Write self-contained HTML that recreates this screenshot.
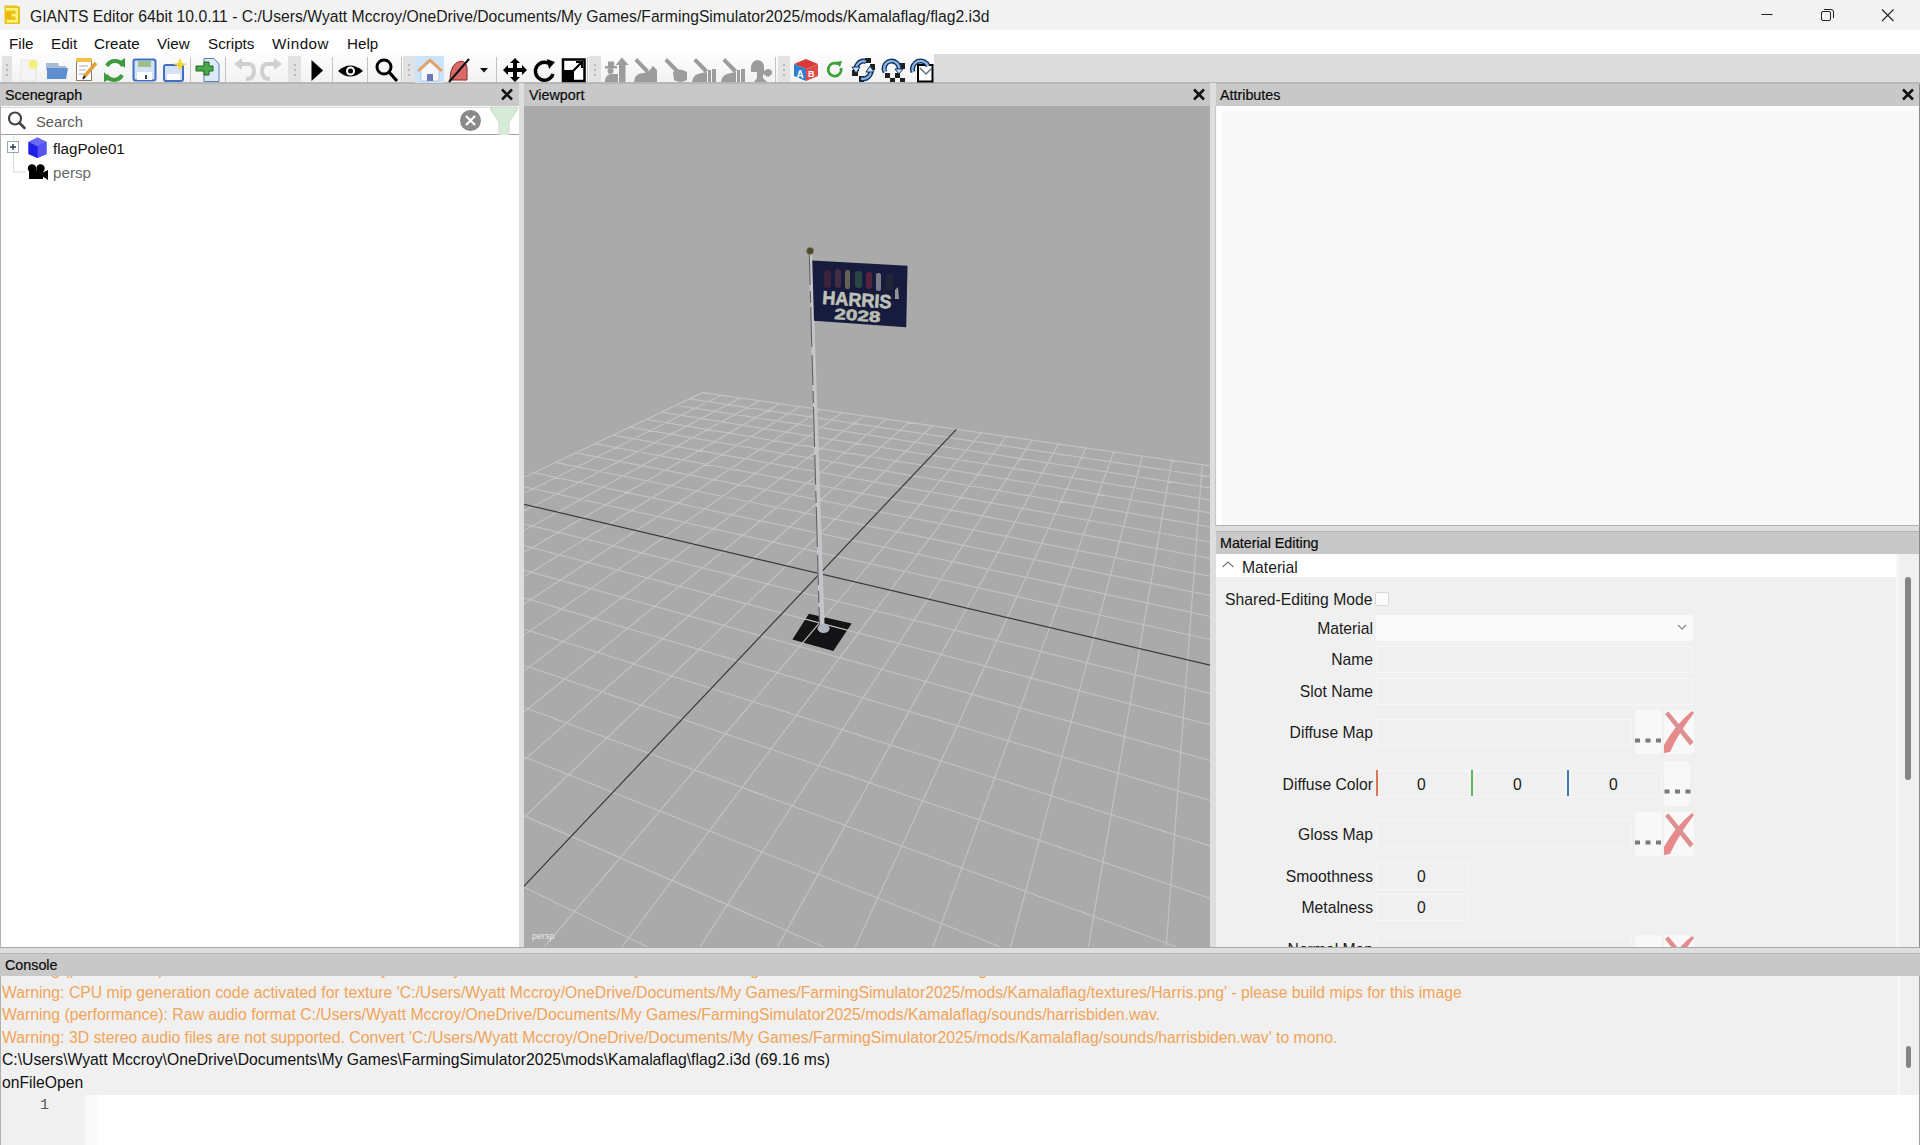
<!DOCTYPE html>
<html><head><meta charset="utf-8">
<style>
*{margin:0;padding:0;box-sizing:border-box}
html,body{width:1920px;height:1145px;overflow:hidden;background:#f0f0f0;font-family:"Liberation Sans",sans-serif;color:#000}
.a{position:absolute}
.t{position:absolute;white-space:nowrap;line-height:1}
.hd{position:absolute;height:22px;background:#c8c8c8;border-top:1px solid #b4b4b4}
.hl{position:absolute;white-space:nowrap;line-height:1;font-size:14.3px;color:#0a0a0a;-webkit-text-stroke:0.2px #0a0a0a}
.cx{position:absolute;width:14px;height:14px}
.lbl{position:absolute;white-space:nowrap;line-height:1;font-size:15.7px;color:#1b1b1b;text-align:right;width:160px}
.fld{position:absolute;background:#f0f0f0;border:1px solid #f6f6f6}
.con{position:absolute;left:2px;white-space:nowrap;line-height:1;font-size:15.72px}
.w{color:#f0a458;font-size:15.78px}
</style></head><body>
<!-- title bar -->
<div class="a" style="left:0;top:0;width:1920px;height:30px;background:#f3f3f3"></div>
<svg class="a" style="left:0;top:0" width="30" height="30">
<path d="M4.5 5.5 L16 5.5 L20 7 L20 24 L4.5 24 Z" fill="#e8c21e"/>
<path d="M5.5 12 L11 12 L11 18 L5.5 18 Z" fill="#f5b800"/>
<path d="M6 8 H18 V22.5 H6.5 V20 H15.5 V16.5 H11.5 V14 H15.5 V10.5 H6 Z" fill="#fdf27a"/>
</svg>
<div class="t" style="left:30px;top:8.5px;font-size:15.71px;color:#1a1a1a">GIANTS Editor 64bit 10.0.11 - C:/Users/Wyatt Mccroy/OneDrive/Documents/My Games/FarmingSimulator2025/mods/Kamalaflag/flag2.i3d</div>
<svg class="a" style="left:1750px;top:0" width="170" height="30">
<path d="M11.5 14.5 H22.5" stroke="#222" stroke-width="1"/>
<rect x="71.5" y="11.5" width="9" height="9" rx="1.5" fill="none" stroke="#222" stroke-width="1"/>
<path d="M74 9.5 H81 Q83.5 9.5 83.5 12 V18" fill="none" stroke="#222" stroke-width="1"/>
<path d="M132 9.5 L143.5 21 M143.5 9.5 L132 21" stroke="#222" stroke-width="1.1"/>
</svg>
<!-- menu -->
<div class="a" style="left:0;top:30px;width:1920px;height:24px;background:#fff"></div>
<div class="t" style="left:9px;top:36px;font-size:15.2px;color:#111">File</div>
<div class="t" style="left:51px;top:36px;font-size:15.2px;color:#111">Edit</div>
<div class="t" style="left:94px;top:36px;font-size:15.2px;color:#111">Create</div>
<div class="t" style="left:157px;top:36px;font-size:15.2px;color:#111">View</div>
<div class="t" style="left:208px;top:36px;font-size:15.2px;color:#111">Scripts</div>
<div class="t" style="left:272px;top:36px;font-size:15.2px;letter-spacing:0.5px;color:#111">Window</div>
<div class="t" style="left:347px;top:36px;font-size:15.2px;color:#111">Help</div>
<!-- toolbar -->
<div class="a" style="left:0;top:54px;width:1920px;height:29px;background:#dcdcdc"></div>
<div class="a" style="left:0;top:54px;width:934px;height:29px;background:linear-gradient(#fdfdfd,#f1f1f1)"></div>
<div class="a" style="left:0;top:82px;width:1920px;height:1px;background:#b9b9b9"></div>
<svg class="a" style="left:0;top:0" width="940" height="84">
<!-- grips -->
<g fill="#e2e2e2">
<rect x="2" y="56" width="10" height="26"/><rect x="288" y="56" width="13" height="26"/><rect x="403" y="56" width="12" height="26"/><rect x="589" y="56" width="12" height="26"/><rect x="778" y="56" width="12" height="26"/>
</g>
<g fill="#b8b8b8">
<rect x="6" y="64" width="2" height="2"/><rect x="6" y="69" width="2" height="2"/><rect x="6" y="74" width="2" height="2"/>
<rect x="294" y="64" width="2" height="2"/><rect x="294" y="69" width="2" height="2"/><rect x="294" y="74" width="2" height="2"/>
<rect x="408" y="64" width="2" height="2"/><rect x="408" y="69" width="2" height="2"/><rect x="408" y="74" width="2" height="2"/>
<rect x="594" y="64" width="2" height="2"/><rect x="594" y="69" width="2" height="2"/><rect x="594" y="74" width="2" height="2"/>
<rect x="783" y="64" width="2" height="2"/><rect x="783" y="69" width="2" height="2"/><rect x="783" y="74" width="2" height="2"/>
</g>
<!-- separators -->
<g fill="#c4c4c4">
<rect x="190" y="58" width="1" height="24"/><rect x="225" y="57" width="1" height="25"/><rect x="332" y="57" width="1" height="25"/><rect x="367" y="57" width="1" height="25"/><rect x="401" y="57" width="1" height="25"/><rect x="496" y="57" width="1" height="25"/><rect x="587" y="57" width="1" height="25"/><rect x="775" y="57" width="1" height="25"/>
</g>
<!-- new -->
<rect x="21" y="60" width="15" height="21" fill="#f4f4f4" stroke="#e3e3e3"/>
<circle cx="33" cy="64.5" r="4.5" fill="#f3f07a"/>
<!-- open folder -->
<path d="M46 63 L58 63 L59 66 L66 66 L66 70 L46 70 Z" fill="#a9bcd6"/>
<path d="M47 68 L68 68 L66 79 L47 79 Z" fill="#5f8fd0"/>
<!-- notepad -->
<rect x="76.5" y="60.5" width="15" height="20" fill="#fff" stroke="#8a7a60"/>
<rect x="76" y="58" width="16" height="4" fill="#f3c24a"/>
<path d="M79 66 H88 M79 70 H86 M79 74 H85" stroke="#aaa" stroke-width="1"/>
<path d="M84 77 L96 63" stroke="#e2a23a" stroke-width="3.5"/><path d="M83 79 L85 76" stroke="#222" stroke-width="2"/>
<!-- refresh green -->
<path d="M107 66 A9 9 0 0 1 123 66" fill="none" stroke="#3d9b3d" stroke-width="4"/>
<path d="M122 75 A9 9 0 0 1 106 75" fill="none" stroke="#3d9b3d" stroke-width="4"/>
<path d="M119 62 L125 58 L125 68 Z M110 79 L104 82 L104 72 Z" fill="#3d9b3d"/>
<!-- save -->
<rect x="133.5" y="59.5" width="22" height="21" rx="2" fill="#d5e2f5" stroke="#3e6fc5" stroke-width="2"/>
<rect x="138" y="61" width="13" height="6" fill="#9ec08a"/>
<rect x="137" y="72" width="15" height="8" fill="#fff"/><rect x="145" y="75" width="2" height="4" fill="#345"/>
<!-- save as -->
<rect x="164" y="65" width="19" height="16" rx="2" fill="#d5e2f5" stroke="#3e6fc5" stroke-width="2"/>
<rect x="167" y="74" width="13" height="6" fill="#fff"/>
<path d="M180 58 L182 63 L187 64 L182 66 L180 71 L178 66 L173 64 L178 63 Z" fill="#f2d430"/>
<!-- add page -->
<path d="M204 58.5 H214 L219 64 V81.5 H204 Z" fill="#dde9f7" stroke="#5b7fb5"/>
<path d="M196 66 H204 V62 H209 V66 H213 V71 H209 V75 H204 V71 H196 Z" fill="#4aa84a" stroke="#1f6b1f" stroke-width="1"/>
<!-- undo / redo -->
<path d="M240 64 L248 64 Q254 64 254 71 Q254 79 246 79" fill="none" stroke="#cfcfcf" stroke-width="4"/>
<path d="M234 64 L242 58 L242 70 Z" fill="#cfcfcf"/>
<path d="M276 64 L268 64 Q262 64 262 71 Q262 79 270 79" fill="none" stroke="#cfcfcf" stroke-width="4"/>
<path d="M282 64 L274 58 L274 70 Z" fill="#cfcfcf"/>
<!-- play -->
<path d="M311.5 60 L323 70.5 L311.5 81 Z" fill="#000"/>
<!-- eye -->
<path d="M338 71 Q350 60 363 71 Q350 82 338 71 Z" fill="#000"/>
<circle cx="350.5" cy="71" r="4.5" fill="#fff"/><circle cx="350.5" cy="71" r="2.5" fill="#000"/>
<!-- magnifier -->
<circle cx="384" cy="67" r="7" fill="none" stroke="#000" stroke-width="3"/>
<path d="M389 72 L397 81" stroke="#000" stroke-width="3.2"/>
<!-- home -->
<rect x="415" y="56" width="29" height="27" fill="#cce4f7"/>
<path d="M421 70 L430 62 L439 70 V81 H421 Z" fill="#f4f7fb" stroke="#b9c7d8"/>
<path d="M418 71 L430 60 L442 71" fill="none" stroke="#e8a060" stroke-width="2.5"/>
<rect x="427" y="74" width="6" height="7" fill="#6f78b8"/>
<!-- red icon -->
<path d="M450 80 Q450 62 462 61 Q468 63 467 72 L467 80 Z" fill="#d86a6a" stroke="#8a2a2a"/>
<path d="M449 82 L469 59" stroke="#111" stroke-width="2"/>
<path d="M480 68 H488 L484 72.5 Z" fill="#111"/>
<!-- move -->
<g fill="#000"><path d="M515 58 L520 63 H517 V68 H522 V65 L527 70 L522 75 V72 H517 V77 H520 L515 82 L510 77 H513 V72 H508 V75 L503 70 L508 65 V68 H513 V63 H510 Z"/></g>
<!-- rotate -->
<path d="M551 65 A9 9 0 1 0 553 74" fill="none" stroke="#000" stroke-width="3.5"/>
<path d="M547 59 L555 62 L549 69 Z" fill="#000"/>
<!-- scale -->
<rect x="563" y="59.5" width="21.5" height="21.5" fill="#fff" stroke="#000" stroke-width="2.5"/>
<rect x="563" y="70" width="11" height="11" fill="#000"/>
<path d="M573 71 L582 62 M576 62 H582 V68" fill="none" stroke="#000" stroke-width="2.2"/>
<!-- gray icons -->
<g fill="#9c9c9c">
<rect x="608" y="61.5" width="6" height="5"/><rect x="605" y="66" width="12" height="2.5"/><circle cx="610.5" cy="71" r="3"/>
<path d="M615.5 65 L622 57.5 L628.5 65 Z"/><rect x="619" y="64" width="6.5" height="18"/>
<path d="M605 82 Q605 74 612 74 L618 74 L618 82 Z"/>
<path d="M637 58 L649 70 L646 73 L634.5 61 Z"/>
<path d="M634 82 Q634.5 73 644 73 L649 71 L653 66 L657 70 V82 Z"/>
<path d="M667 58 L679 70 L676 73 L664.5 61 Z"/>
<path d="M673 72 Q680 67 687 72 V80 Q680 84 674 80 Z"/>
<path d="M696 58 L708 70 L705 73 L693.5 61 Z"/>
<path d="M692 82 Q692.5 74 702 73 L707 72 V82 Z"/><rect x="708" y="70" width="3" height="12"/><rect x="712" y="69" width="4" height="13"/>
<path d="M725 58 L737 70 L734 73 L722.5 61 Z"/>
<path d="M721 82 Q721.5 74 731 73 L736 72 V82 Z"/><rect x="737" y="70" width="3" height="12"/><rect x="741" y="69" width="4" height="13"/>
<path d="M751 72 Q750 61 757 60 Q763 60 764 66 L764 71 Q769 67 772 71 Q773 75 768 77 L763 74 L763 78 L767 82 H754 L757 78 L757 72 Z"/>
</g>
<!-- AB cube -->
<path d="M794 64 L806 59 L818 64 L806 69 Z" fill="#d83a3a"/>
<path d="M794 64 L806 69 V81 L794 76 Z" fill="#2f7fd0"/>
<path d="M806 69 L818 64 V76 L806 81 Z" fill="#e04a4a"/>
<text x="796.5" y="78" font-size="10" font-weight="bold" fill="#fff" font-family="Liberation Sans">A</text>
<text x="808" y="77" font-size="9" font-weight="bold" fill="#fff" font-family="Liberation Sans">B</text>
<!-- small green refresh -->
<path d="M841 68 A6.5 6.5 0 1 1 838 64" fill="none" stroke="#3aa03a" stroke-width="2.8"/>
<path d="M835 62 L842 61 L840 67 Z" fill="#3aa03a"/>
<!-- blue icons -->
<g fill="#1f1f1f">
<rect x="865" y="58" width="6" height="5"/><rect x="852" y="70" width="6" height="6"/><rect x="870" y="64" width="5" height="6"/><rect x="859" y="76" width="5" height="6"/>
<rect x="885" y="73" width="5" height="5"/><rect x="895" y="73" width="5" height="5"/><rect x="890" y="78" width="5" height="4"/><rect x="900" y="63" width="5" height="6"/><rect x="900" y="78" width="5" height="4"/>
</g>
<g fill="none">
<path d="M857 72 A7.5 7.5 0 0 1 866 61.5" stroke="#12305a" stroke-width="5"/>
<path d="M857 72 A7.5 7.5 0 0 1 866 61.5" stroke="#8db6e6" stroke-width="2.2"/>
<path d="M870 68 A7.5 7.5 0 0 1 861 78.5" stroke="#12305a" stroke-width="5"/>
<path d="M870 68 A7.5 7.5 0 0 1 861 78.5" stroke="#8db6e6" stroke-width="2.2"/>
</g>
<path d="M852 67 L860 67 L856 73 Z M866 72 L874 72 L870 66 Z" fill="#cfe3f7" stroke="#12305a" stroke-width="1"/>
<path d="M885 72 A7.5 7.5 0 1 1 899 70" fill="none" stroke="#12305a" stroke-width="5"/>
<path d="M885 72 A7.5 7.5 0 1 1 899 70" fill="none" stroke="#8db6e6" stroke-width="2.2"/>
<path d="M895 69 L903 69 L899 74 Z" fill="#cfe3f7" stroke="#12305a" stroke-width="1"/>
<rect x="918" y="65" width="14.5" height="16.5" fill="#fff" stroke="#000" stroke-width="2"/>
<path d="M913 72 A7.5 7.5 0 1 1 928 66" fill="none" stroke="#12305a" stroke-width="5"/>
<path d="M913 72 A7.5 7.5 0 1 1 928 66" fill="none" stroke="#8db6e6" stroke-width="2.2"/>
<path d="M920 68 L926 74 L932 68" fill="none" stroke="#5a6a7a" stroke-width="1.3"/>
</svg>

<!-- panel headers -->
<div class="hd" style="left:0;top:83px;width:519px;height:23px"></div>
<div class="hl" style="left:5px;top:87.8px">Scenegraph</div>
<div class="a" style="left:519px;top:83px;width:5px;height:865px;background:#dedede"></div>
<div class="hd" style="left:524px;top:83px;width:686px;height:23px"></div>
<div class="hl" style="left:529px;top:87.8px">Viewport</div>
<div class="a" style="left:1210px;top:83px;width:6px;height:865px;background:#dedede"></div>
<div class="hd" style="left:1216px;top:83px;width:704px;height:23px"></div>
<div class="hl" style="left:1220px;top:87.8px">Attributes</div>
<svg class="a" style="left:0;top:0;pointer-events:none" width="1920" height="1145">
<g stroke="#111" stroke-width="2.5" stroke-linecap="butt">
<path d="M502 89.5 L512 99.5 M512 89.5 L502 99.5"/>
<path d="M1194 89.5 L1204 99.5 M1204 89.5 L1194 99.5"/>
<path d="M1903 89.5 L1913 99.5 M1913 89.5 L1903 99.5"/>
<path d="M1903 537.5 L1913 547.5 M1913 537.5 L1903 547.5"/>
<path d="M1903 959.5 L1913 969.5 M1913 959.5 L1903 969.5"/>
</g>
</svg>
<!-- scenegraph content -->
<div class="a" style="left:0;top:106px;width:1px;height:842px;background:#b0b0b0"></div>
<div class="a" style="left:1px;top:106px;width:518px;height:842px;background:#fff"></div>
<div class="a" style="left:1px;top:947px;width:518px;height:1px;background:#a8a8a8"></div>
<div class="a" style="left:1px;top:134px;width:518px;height:1px;background:#9f9f9f"></div>
<div class="a" style="left:1px;top:107px;width:488px;height:1px;background:#d8d8d8"></div>
<svg class="a" style="left:0;top:104px" width="520" height="80">
<circle cx="15" cy="14.5" r="6" fill="none" stroke="#444" stroke-width="2.2"/>
<path d="M19.5 19 L24.5 24" stroke="#444" stroke-width="2.6" stroke-linecap="round"/>
<circle cx="470.5" cy="16.5" r="10.5" fill="#8a8a8a"/>
<path d="M466 12 L475 21 M475 12 L466 21" stroke="#fff" stroke-width="2.2"/>
<path d="M490 3 L518 3 L518 6 L509 18 L509 31 L499 31 L499 18 L490 6 Z" fill="#d6ead8"/>
<path d="M490 3 L518 3 L509 18 L509 31 M499 31 L499 18 L490 3" fill="none" stroke="#cfd8cf" stroke-width="1"/>
<!-- tree -->
<path d="M13.5 33 V68 H26" fill="none" stroke="#b8b8b8" stroke-width="1" stroke-dasharray="1 1"/>
<rect x="7.5" y="37.5" width="11" height="11" fill="#fff" stroke="#98a8b8"/>
<path d="M10 43 H16 M13 40 V46" stroke="#2a3a4a" stroke-width="1.4"/>
<path d="M37.5 33.5 L46.5 38 L46.5 50 L37.5 54 L28.5 50 L28.5 38 Z" fill="#3a3aee"/>
<path d="M28.5 38 L37.5 42.5 L46.5 38 L37.5 33.5 Z" fill="#6a6af6"/>
<path d="M37.5 42.5 L46.5 38 L46.5 50 L37.5 54 Z" fill="#5454f2"/>
<path d="M37.5 42.5 L37.5 54 L28.5 50 L28.5 38 Z" fill="#1f1fe6"/>
<circle cx="32" cy="64.5" r="4.2" fill="#000"/><circle cx="40.5" cy="64.5" r="4.2" fill="#000"/>
<rect x="29" y="66" width="14" height="9" fill="#000"/>
<path d="M42 69 L48 66 L48 76 L42 72 Z" fill="#000"/>
</svg>
<div class="t" style="left:36px;top:115px;font-size:14.8px;color:#5a5a5a">Search</div>
<div class="t" style="left:53px;top:141px;font-size:15.2px;color:#111">flagPole01</div>
<div class="t" style="left:53px;top:165px;font-size:15.2px;color:#6a6a6a">persp</div>

<!-- viewport -->
<div class="a" style="left:524px;top:106px;width:686px;height:842px;background:#aaaaaa;overflow:hidden">
<svg width="686" height="842" style="position:absolute;left:0;top:0"><path d="M284.9 507.8 L327.7 517.6 L309.3 545.1 L268.4 533.5 Z" fill="#141416"/>
<path d="M1044.7 1624.7L774.4 372.7M1044.7 1624.7L-560.4 637.3M878.8 1522.7L741.4 368.0M998.5 1410.7L-490.3 604.0M733.1 1433.0L709.3 363.3M963.2 1247.6L-427.5 574.2M603.9 1353.5L678.2 358.8M935.5 1119.1L-371.0 547.4M488.6 1282.7L647.9 354.4M913.1 1015.3L-319.9 523.2M385.2 1219.0L618.4 350.2M894.6 929.7L-273.5 501.1M291.8 1161.6L589.7 346.0M879.1 857.9L-231.0 481.0M207.1 1109.5L561.7 342.0M865.9 796.8L-192.1 462.5M129.9 1062.0L534.5 338.0M854.5 744.1L-156.4 445.6M59.3 1018.5L508.0 334.2M844.7 698.3L-123.4 429.9M-5.6 978.6L482.2 330.5M836.0 658.1L-92.8 415.4M-65.4 941.9L457.0 326.8M828.3 622.5L-64.4 401.9M-172.0 876.3L408.4 319.8M815.3 562.3L-13.3 377.7M-219.7 847.0L385.0 316.4M809.7 536.6L9.8 366.7M-264.1 819.6L362.2 313.1M804.7 513.4L31.4 356.4M-305.7 794.0L339.8 309.9M800.1 492.2L51.8 346.8M-344.6 770.1L318.1 306.7M796.0 472.8L70.9 337.7M-381.1 747.6L296.8 303.6M792.1 455.0L88.9 329.1M-415.4 726.5L276.0 300.6M788.6 438.6L106.0 321.1M-447.8 706.6L255.6 297.7M785.3 423.4L122.1 313.4M-478.3 687.8L235.8 294.8M782.3 409.3L137.3 306.2M-507.2 670.1L216.3 292.0M779.4 396.3L151.8 299.3M-534.5 653.3L197.3 289.3M776.8 384.1L165.6 292.8M-560.4 637.3L178.7 286.6M774.4 372.7L178.7 286.6" stroke="#c2c2c2" stroke-width="1.2" fill="none"/><path d="M-120.7 907.8L432.4 323.3M821.4 590.8L-37.9 389.4" stroke="#3a3a3a" stroke-width="1.2" fill="none"/><path d="M284.8 149 L288.2 149 L300.5 519 L295 519 Z" fill="#c4c5c8"/>
<path d="M285.3 149 L295.5 519" stroke="#505050" stroke-width="1.1" stroke-dasharray="30 6 12 4 40 8" fill="none" opacity="0.85"/>
<ellipse cx="299.6" cy="522.5" rx="6" ry="4.5" fill="#aeb3c0"/>
<circle cx="286.1" cy="144.9" r="3.6" fill="#4a4a30" stroke="#8a8a60" stroke-width="0.8"/>
<g>
<path d="M288.3 154.5 L383.5 159.8 L382.2 221.3 L290 214.8 Z" fill="#171b3e"/>
<g opacity="0.55">
<rect x="300" y="164" width="7" height="18" rx="3" fill="#5a2a3a"/>
<rect x="311" y="163" width="6" height="19" rx="3" fill="#6a3a4a"/>
<rect x="321" y="164" width="5" height="19" rx="2" fill="#a89a70"/>
<rect x="331" y="165" width="7" height="17" rx="3" fill="#3a6a4a"/>
<rect x="342" y="166" width="6" height="17" rx="3" fill="#8a2a3a"/>
<rect x="352" y="167" width="5" height="18" rx="2" fill="#c8c8c0"/>
<rect x="362" y="168" width="7" height="16" rx="3" fill="#2a3030"/>
</g>
<g transform="translate(298,198) rotate(3.8)">
<text x="0" y="0" font-family="Liberation Sans" font-weight="bold" font-size="19" fill="#bfc1b8" stroke="#bfc1b8" stroke-width="0.6" transform="scale(0.95,1)">HARRIS</text>
</g>
<g transform="translate(310,213) rotate(4.2)">
<text x="0" y="0" font-family="Liberation Sans" font-weight="bold" font-size="16" fill="#b9bcb2" stroke="#b9bcb2" stroke-width="0.6" transform="scale(1.3,0.95)">2028</text>
</g>
<path d="M371 184 L374 181 L375 193 L371 193 Z" fill="#b0b4a8" opacity="0.8"/>
</g>
</svg>
<div class="t" style="left:8px;top:826px;font-size:9px;color:#e8e8e8">persp</div>
</div>
<!-- attributes -->
<div class="a" style="left:1216px;top:106px;width:704px;height:420px;background:#f8f8f8"></div>
<div class="a" style="left:1215px;top:106px;width:1px;height:420px;background:#c6c6c6"></div>
<div class="a" style="left:1217px;top:106px;width:5px;height:420px;background:#ffffff"></div>
<div class="a" style="left:1217px;top:106px;width:702px;height:5px;background:#ffffff"></div>
<div class="a" style="left:1919px;top:84px;width:1px;height:864px;background:#8c8c8c"></div>
<div class="a" style="left:1216px;top:525px;width:704px;height:1px;background:#b0b0b0"></div>
<div class="a" style="left:1216px;top:526px;width:703px;height:6px;background:#dedede"></div>
<div class="hd" style="left:1216px;top:531px;width:703px;height:23px"></div>
<div class="hl" style="left:1220px;top:535.8px">Material Editing</div>
<div class="a" style="left:1216px;top:554px;width:703px;height:393px;background:#f0f0f0"></div>
<div class="a" style="left:1216px;top:554px;width:681px;height:23px;background:#fff"></div>
<div class="a" style="left:1896px;top:554px;width:3px;height:393px;background:#f6f6f6"></div>
<div class="a" style="left:1905px;top:577px;width:6px;height:203px;background:#858585;border-radius:3px"></div>
<div class="a" style="left:1216px;top:947px;width:704px;height:1px;background:#c4c4c4"></div>
<svg class="a" style="left:1216px;top:554px" width="30" height="23"><path d="M6.5 13 L12 8 L17.5 13" fill="none" stroke="#777" stroke-width="1.2"/></svg>
<div class="t" style="left:1242px;top:559.7px;font-size:15.7px;color:#1b1b1b">Material</div>
<div class="t" style="left:1225px;top:591.7px;font-size:15.7px;color:#1b1b1b">Shared-Editing Mode</div>
<div class="a" style="left:1375px;top:592px;width:14px;height:14px;background:#fbfbfb;border:1px solid #d8d8d8;border-radius:2px"></div>
<div class="lbl" style="left:1213px;top:620.9px">Material</div>
<div class="a" style="left:1376px;top:615px;width:317px;height:26px;background:#fafafa;border-radius:2px"></div>
<svg class="a" style="left:1676px;top:622px" width="12" height="10"><path d="M2 3 L6 7 L10 3" fill="none" stroke="#888" stroke-width="1.2"/></svg>
<div class="lbl" style="left:1213px;top:652.4px">Name</div>
<div class="fld" style="left:1376px;top:646px;width:317px;height:27px"></div>
<div class="lbl" style="left:1213px;top:684.3px">Slot Name</div>
<div class="fld" style="left:1376px;top:678px;width:317px;height:27px"></div>
<div class="lbl" style="left:1213px;top:725.3px">Diffuse Map</div>
<div class="fld" style="left:1376px;top:719px;width:256px;height:27px"></div>
<div class="a" style="left:1635px;top:710px;width:27px;height:44px;background:#f8f8f8;border-radius:4px"></div>
<div class="a" style="left:1664px;top:710px;width:30px;height:44px;background:#f8f8f8;border-radius:4px"></div>
<div class="lbl" style="left:1213px;top:776.7px">Diffuse Color</div>
<div class="a" style="left:1376px;top:770px;width:2px;height:26px;background:#e0745a"></div>
<div class="fld" style="left:1378px;top:770px;width:92px;height:27px"></div>
<div class="t" style="left:1417px;top:776.7px;font-size:15.7px;color:#1b1b1b">0</div>
<div class="a" style="left:1471px;top:770px;width:2px;height:26px;background:#5cb85c"></div>
<div class="fld" style="left:1474px;top:770px;width:92px;height:27px"></div>
<div class="t" style="left:1513px;top:776.7px;font-size:15.7px;color:#1b1b1b">0</div>
<div class="a" style="left:1567px;top:770px;width:2px;height:26px;background:#3f78c0"></div>
<div class="fld" style="left:1570px;top:770px;width:92px;height:27px"></div>
<div class="t" style="left:1609px;top:776.7px;font-size:15.7px;color:#1b1b1b">0</div>
<div class="a" style="left:1664px;top:761px;width:26px;height:45px;background:#f8f8f8;border-radius:4px"></div>
<div class="lbl" style="left:1213px;top:827.3px">Gloss Map</div>
<div class="fld" style="left:1376px;top:820px;width:256px;height:27px"></div>
<div class="a" style="left:1635px;top:812px;width:27px;height:44px;background:#f8f8f8;border-radius:4px"></div>
<div class="a" style="left:1664px;top:812px;width:30px;height:44px;background:#f8f8f8;border-radius:4px"></div>
<div class="lbl" style="left:1213px;top:868.6px">Smoothness</div>
<div class="fld" style="left:1376px;top:862px;width:93px;height:28px"></div>
<div class="t" style="left:1417px;top:868.6px;font-size:15.7px;color:#1b1b1b">0</div>
<div class="lbl" style="left:1213px;top:900.4px">Metalness</div>
<div class="fld" style="left:1376px;top:894px;width:93px;height:27px"></div>
<div class="t" style="left:1417px;top:900.4px;font-size:15.7px;color:#1b1b1b">0</div>
<div class="a" style="left:1216px;top:925px;width:680px;height:22px;overflow:hidden">
<div class="lbl" style="left:-3px;top:17px">Normal Map</div>
<div class="fld" style="left:160px;top:12px;width:256px;height:27px"></div>
<div class="a" style="left:419px;top:10px;width:27px;height:44px;background:#f8f8f8;border-radius:4px"></div>
<div class="a" style="left:448px;top:10px;width:30px;height:44px;background:#f8f8f8;border-radius:4px"></div>
<svg class="a" style="left:448px;top:10px" width="30" height="30"><path d="M0 43 L6 42 Q15 22 30 3 L28 1 Q11 15 0 35 Z M1 4 L4.5 1.5 L29.5 32 L26 35.5 Z" fill="#e68a8c"/></svg>
</div>
<svg class="a" style="left:1600px;top:700px" width="100" height="170">
<g fill="#7a7a7a">
<rect x="35" y="38.5" width="5" height="4"/><rect x="45.5" y="38.5" width="5" height="4"/><rect x="56" y="38.5" width="5" height="4"/>
<rect x="64.5" y="89.5" width="5" height="4"/><rect x="75" y="89.5" width="5" height="4"/><rect x="85.5" y="89.5" width="5" height="4"/>
<rect x="35" y="140.5" width="5" height="4"/><rect x="45.5" y="140.5" width="5" height="4"/><rect x="56" y="140.5" width="5" height="4"/>
</g>
<g fill="#e68a8c">
<path d="M64 53 L70 52 Q79 32 94 13 L92 11 Q75 25 64 45 Z"/>
<path d="M65 14 L68.5 11.5 L93.5 42 L90 45.5 Z" fill="#dc9090"/>
<path d="M64 155 L70 154 Q79 134 94 115 L92 113 Q75 127 64 147 Z"/>
<path d="M65 116 L68.5 113.5 L93.5 144 L90 147.5 Z" fill="#dc9090"/>
</g>
</svg>

<!-- console -->
<div class="a" style="left:0;top:947px;width:1920px;height:1px;background:#a8a8a8"></div>
<div class="a" style="left:0;top:948px;width:1920px;height:6px;background:#dedede"></div>
<div class="hd" style="left:0;top:953px;width:1920px;height:23px"></div>
<div class="hl" style="left:5px;top:957.8px">Console</div>
<div class="a" style="left:0;top:976px;width:1920px;height:119px;background:#f0f0f0;overflow:hidden">
<div class="con w" style="top:-14.3px">Warning (performance): Raw audio format C:/Users/Wyatt Mccroy/OneDrive/Documents/My Games/FarmingSimulator2025/mods/Kamalaflag/sounds/kamala.wav.</div>
<div class="con w" style="top:8.9px">Warning: CPU mip generation code activated for texture 'C:/Users/Wyatt Mccroy/OneDrive/Documents/My Games/FarmingSimulator2025/mods/Kamalaflag/textures/Harris.png' - please build mips for this image</div>
<div class="con w" style="top:31.3px">Warning (performance): Raw audio format C:/Users/Wyatt Mccroy/OneDrive/Documents/My Games/FarmingSimulator2025/mods/Kamalaflag/sounds/harrisbiden.wav.</div>
<div class="con w" style="top:53.8px">Warning: 3D stereo audio files are not supported. Convert 'C:/Users/Wyatt Mccroy/OneDrive/Documents/My Games/FarmingSimulator2025/mods/Kamalaflag/sounds/harrisbiden.wav' to mono.</div>
<div class="con" style="top:76.2px;color:#111">C:\Users\Wyatt Mccroy\OneDrive\Documents\My Games\FarmingSimulator2025\mods\Kamalaflag\flag2.i3d (69.16 ms)</div>
<div class="con" style="top:98.7px;color:#111">onFileOpen</div>
</div>
<div class="a" style="left:0;top:976px;width:1px;height:169px;background:#b0b0b0"></div>
<div class="a" style="left:1897px;top:976px;width:3px;height:119px;background:#f5f5f5"></div>
<div class="a" style="left:1906px;top:1046px;width:5px;height:22px;background:#858585;border-radius:3px"></div>
<div class="a" style="left:1px;top:1095px;width:1919px;height:50px;background:#fff"></div>
<div class="a" style="left:1px;top:1095px;width:84px;height:50px;background:#f0f0f0"></div>
<div class="a" style="left:85px;top:1095px;width:12px;height:50px;background:#fafafa"></div>
<div class="t" style="left:40px;top:1098px;font-size:15px;font-family:'Liberation Mono',monospace;color:#555">1</div>
<div class="a" style="left:1919px;top:976px;width:1px;height:169px;background:#a0a0a0"></div>

</body></html>
